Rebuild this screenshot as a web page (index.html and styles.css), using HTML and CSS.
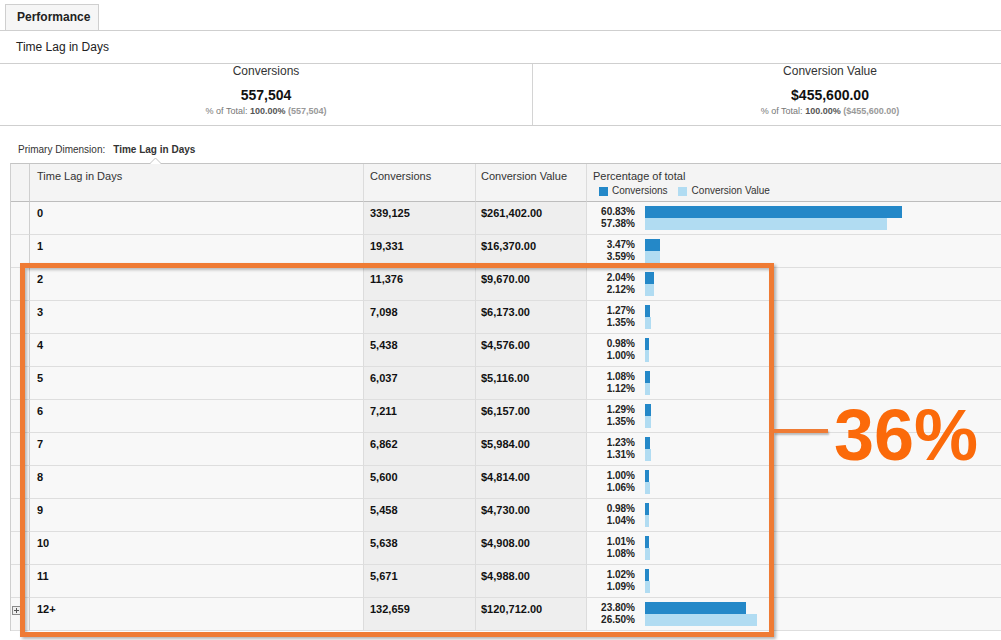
FILE: index.html
```html
<!DOCTYPE html>
<html>
<head>
<meta charset="utf-8">
<title>Performance - Time Lag in Days</title>
<link rel="stylesheet" href="styles.css">
</head>
<body>
<div class="tabbar"><div class="tab">Performance</div></div>
<div class="title">Time Lag in Days</div>
<div class="summary">
  <div class="metric metric-left">
    <div class="m-name">Conversions</div>
    <div class="m-value">557,504</div>
    <div class="m-total">% of Total: <b class="dk">100.00%</b> <b class="lt">(557,504)</b></div>
  </div>
  <div class="metric metric-right">
    <div class="m-name">Conversion Value</div>
    <div class="m-value">$455,600.00</div>
    <div class="m-total">% of Total: <b class="dk">100.00%</b> <b class="lt">($455,600.00)</b></div>
  </div>
</div>
<div class="dimbar">Primary Dimension:<b class="dimval">Time Lag in Days</b>
  <svg class="notch" width="12" height="7" viewBox="0 0 12 7"><polygon points="0,7 5.5,1 11,7" fill="#fff"/><polyline points="0,6.5 5.5,1 11,6.5" fill="none" stroke="#c4c4c4" stroke-width="1"/></svg>
</div>
<table class="grid">
  <thead>
    <tr>
      <th class="c0"></th>
      <th class="c1">Time Lag in Days</th>
      <th class="c2">Conversions</th>
      <th class="c3">Conversion Value</th>
      <th class="c4">Percentage of total
        <div class="legend"><span class="sq sq-conv"></span>Conversions<span class="sq sq-val"></span>Conversion Value</div>
      </th>
    </tr>
  </thead>
  <tbody>
    <tr><td class="c0"></td><td class="c1">0</td><td class="c2">339,125</td><td class="c3">$261,402.00</td><td class="c4"><div class="pw"><div class="lbl"><span>60.83%</span><span>57.38%</span></div><div class="bars"><div class="bar conv" style="width:257px"></div><div class="bar val" style="width:242.4px"></div></div></div></td></tr>
    <tr><td class="c0"></td><td class="c1">1</td><td class="c2">19,331</td><td class="c3">$16,370.00</td><td class="c4"><div class="pw"><div class="lbl"><span>3.47%</span><span>3.59%</span></div><div class="bars"><div class="bar conv" style="width:14.7px"></div><div class="bar val" style="width:15.2px"></div></div></div></td></tr>
    <tr><td class="c0"></td><td class="c1">2</td><td class="c2">11,376</td><td class="c3">$9,670.00</td><td class="c4"><div class="pw"><div class="lbl"><span>2.04%</span><span>2.12%</span></div><div class="bars"><div class="bar conv" style="width:8.6px"></div><div class="bar val" style="width:9px"></div></div></div></td></tr>
    <tr><td class="c0"></td><td class="c1">3</td><td class="c2">7,098</td><td class="c3">$6,173.00</td><td class="c4"><div class="pw"><div class="lbl"><span>1.27%</span><span>1.35%</span></div><div class="bars"><div class="bar conv" style="width:5.4px"></div><div class="bar val" style="width:5.7px"></div></div></div></td></tr>
    <tr><td class="c0"></td><td class="c1">4</td><td class="c2">5,438</td><td class="c3">$4,576.00</td><td class="c4"><div class="pw"><div class="lbl"><span>0.98%</span><span>1.00%</span></div><div class="bars"><div class="bar conv" style="width:4.1px"></div><div class="bar val" style="width:4.2px"></div></div></div></td></tr>
    <tr><td class="c0"></td><td class="c1">5</td><td class="c2">6,037</td><td class="c3">$5,116.00</td><td class="c4"><div class="pw"><div class="lbl"><span>1.08%</span><span>1.12%</span></div><div class="bars"><div class="bar conv" style="width:4.6px"></div><div class="bar val" style="width:4.7px"></div></div></div></td></tr>
    <tr><td class="c0"></td><td class="c1">6</td><td class="c2">7,211</td><td class="c3">$6,157.00</td><td class="c4"><div class="pw"><div class="lbl"><span>1.29%</span><span>1.35%</span></div><div class="bars"><div class="bar conv" style="width:5.5px"></div><div class="bar val" style="width:5.7px"></div></div></div></td></tr>
    <tr><td class="c0"></td><td class="c1">7</td><td class="c2">6,862</td><td class="c3">$5,984.00</td><td class="c4"><div class="pw"><div class="lbl"><span>1.23%</span><span>1.31%</span></div><div class="bars"><div class="bar conv" style="width:5.2px"></div><div class="bar val" style="width:5.5px"></div></div></div></td></tr>
    <tr><td class="c0"></td><td class="c1">8</td><td class="c2">5,600</td><td class="c3">$4,814.00</td><td class="c4"><div class="pw"><div class="lbl"><span>1.00%</span><span>1.06%</span></div><div class="bars"><div class="bar conv" style="width:4.2px"></div><div class="bar val" style="width:4.5px"></div></div></div></td></tr>
    <tr><td class="c0"></td><td class="c1">9</td><td class="c2">5,458</td><td class="c3">$4,730.00</td><td class="c4"><div class="pw"><div class="lbl"><span>0.98%</span><span>1.04%</span></div><div class="bars"><div class="bar conv" style="width:4.1px"></div><div class="bar val" style="width:4.4px"></div></div></div></td></tr>
    <tr><td class="c0"></td><td class="c1">10</td><td class="c2">5,638</td><td class="c3">$4,908.00</td><td class="c4"><div class="pw"><div class="lbl"><span>1.01%</span><span>1.08%</span></div><div class="bars"><div class="bar conv" style="width:4.3px"></div><div class="bar val" style="width:4.6px"></div></div></div></td></tr>
    <tr><td class="c0"></td><td class="c1">11</td><td class="c2">5,671</td><td class="c3">$4,988.00</td><td class="c4"><div class="pw"><div class="lbl"><span>1.02%</span><span>1.09%</span></div><div class="bars"><div class="bar conv" style="width:4.3px"></div><div class="bar val" style="width:4.6px"></div></div></div></td></tr>
    <tr><td class="c0"><svg class="expand" width="9" height="9" viewBox="0 0 9 9"><rect x="0.5" y="0.5" width="8" height="8" fill="#eee" stroke="#8a8a8a"/><path d="M2 4.5H7M4.5 2V7" stroke="#555" stroke-width="1"/></svg></td><td class="c1">12+</td><td class="c2">132,659</td><td class="c3">$120,712.00</td><td class="c4"><div class="pw"><div class="lbl"><span>23.80%</span><span>26.50%</span></div><div class="bars"><div class="bar conv" style="width:100.6px"></div><div class="bar val" style="width:112px"></div></div></div></td></tr>
  </tbody>
</table>

<div class="hl-box"></div>
<div class="hl-line"></div>
<div class="hl-text">36%</div>
</body>
</html>
```
FILE: styles.css
```css
* { box-sizing: border-box; }
html, body { margin: 0; padding: 0; }
body {
  position: relative;
  width: 1001px;
  height: 640px;
  overflow: hidden;
  background: #fff;
  color: #222;
  font-family: "Liberation Sans", Arial, Helvetica, sans-serif;
}

/* tab bar */
.tabbar {
  height: 31px;
  border-bottom: 1px solid #cfcfcf;
  padding-left: 5px;
  display: flex;
  align-items: flex-end;
}
.tab {
  height: 26px;
  border: 1px solid #cfcfcf;
  border-bottom: none;
  background: #f6f6f6;
  padding: 0 8px 0 11px;
  font-size: 12px;
  font-weight: bold;
  line-height: 24px;
  color: #222;
}

.title {
  height: 32px;
  padding-left: 16px;
  font-size: 12px;
  line-height: 32px;
  color: #222;
}

/* summary */
.summary {
  display: flex;
  height: 63px;
  border-top: 1px solid #cfcfcf;
  border-bottom: 1px solid #cfcfcf;
}
.metric {
  text-align: center;
}
.metric-left {
  width: 533px;
  border-right: 1px solid #d4d4d4;
}
.metric-right {
  flex: 1;
  padding-left: 126px;
}
.m-name {
  font-size: 12px;
  line-height: 15px;
  color: #333;
}
.m-value {
  margin-top: 7px;
  font-size: 14px;
  font-weight: bold;
  line-height: 18px;
  color: #111;
}
.m-total {
  margin-top: 2px;
  font-size: 9px;
  line-height: 11px;
  color: #777;
}
.m-total .dk { color: #555; }
.m-total .lt { color: #999; }

/* primary dimension */
.dimbar {
  position: relative;
  height: 37px;
  padding: 18px 0 0 18px;
  font-size: 10px;
  line-height: 12px;
  color: #333;
}
.dimval { color: #333; margin-left: 8px; }
.notch {
  position: absolute;
  left: 150px;
  bottom: -1px;
  display: block;
}

/* table */
.grid {
  margin-left: 10px;
  width: 991px;
  table-layout: fixed;
  border-collapse: separate;
  border-spacing: 0;
  border-left: 1px solid #cfcfcf;
  border-top: 1px solid #c4c4c4;
}
.grid th, .grid td {
  padding: 0;
  text-align: left;
  vertical-align: top;
  border-bottom: 1px solid #dedede;
  border-right: 1px solid #dcdcdc;
}
.grid th {
  height: 38px;
  padding-top: 6px;
  font-size: 11px;
  font-weight: normal;
  line-height: 13px;
  color: #333;
  background: #f4f4f4;
  border-bottom-color: #bdbdbd;
}
.grid th.c0 { width: 19px; border-right-color: #cfcfcf; }
.grid th.c1 { width: 334px; }
.grid th.c2 { width: 112px; }
.grid th.c3 { width: 111px; }
.grid th.c4 { border-right: none; }

.grid td {
  height: 33px;
  padding-top: 5px;
  font-size: 11px;
  font-weight: bold;
  line-height: 13px;
  color: #111;
  background: #f8f8f8;
}
.grid td.c0 { border-right-color: #cfcfcf; padding-top: 8px; }
.grid td.c2, .grid td.c3 { background: #eeeeee; }
.grid td.c4 { border-right: none; padding-top: 4px; }

.c1 { padding-left: 7px !important; }
.c2 { padding-left: 6px !important; }
.c3 { padding-left: 5px !important; }
.c4 { padding-left: 6px !important; }

.legend {
  display: flex;
  align-items: center;
  height: 14px;
  margin-top: 1px;
  padding-left: 6px;
  font-size: 10px;
  line-height: 14px;
  color: #333;
}
.sq {
  display: inline-block;
  width: 9px;
  height: 9px;
  margin-right: 4px;
}
.sq-conv { background: #2488c8; }
.sq-val { background: #b1dcf2; margin-left: 10px; margin-right: 5px; }

.expand { display: block; margin-left: 1px; }

/* percentage cell */
.pw {
  display: flex;
  align-items: flex-start;
}
.lbl {
  width: 42px;
  display: flex;
  flex-direction: column;
  align-items: flex-end;
  font-size: 10px;
  font-weight: bold;
  line-height: 12px;
  color: #222;
}
.bars {
  margin-left: 10px;
  display: flex;
  flex-direction: column;
}
.bar { height: 12px; }
.bar.conv { background: #2488c8; }
.bar.val { background: #b1dcf2; }

/* annotation overlay */
.hl-box {
  position: absolute;
  left: 20px;
  top: 263px;
  width: 754px;
  height: 374px;
  border: 5px solid #ef7b34;
  box-shadow: 2px 2px 3px rgba(0, 0, 0, 0.3), inset 2px 2px 3px rgba(0, 0, 0, 0.25);
}
.hl-line {
  position: absolute;
  left: 774px;
  top: 429px;
  width: 54px;
  height: 4px;
  background: #ef7b34;
  box-shadow: 1px 2px 2px rgba(0, 0, 0, 0.25);
}
.hl-text {
  position: absolute;
  left: 834px;
  top: 399px;
  font-size: 72px;
  font-weight: bold;
  line-height: 72px;
  color: #fb6a0a;
}
```
